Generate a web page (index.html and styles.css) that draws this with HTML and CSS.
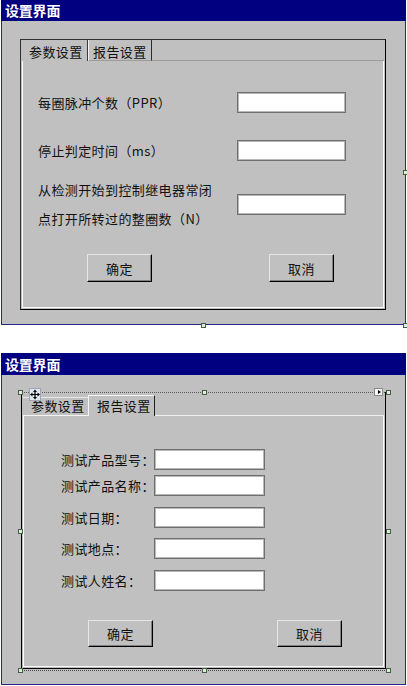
FILE: index.html
```html
<!DOCTYPE html>
<html>
<head>
    <title>设置界面</title>
    <link rel="stylesheet" href="styles.css">
</head>
<body>
    <div class="window win-params">
        <div class="titlebar">设置界面</div>
        <div class="tabctl">
            <div class="tabstrip">
                <div class="tab active">参数设置</div>
                <div class="tab">报告设置</div>
                <div class="tab-fill"></div>
            </div>
            <div class="page">
                <div class="row r1">
                    <label>每圈脉冲个数（PPR）</label>
                    <input type="text">
                </div>
                <div class="row r2">
                    <label>停止判定时间（ms）</label>
                    <input type="text">
                </div>
                <div class="row r3">
                    <label>从检测开始到控制继电器常闭<br>点打开所转过的整圈数（N）</label>
                    <input type="text">
                </div>
                <div class="buttons">
                    <button class="btn-ok">确定</button>
                    <button class="btn-cancel">取消</button>
                </div>
            </div>
        </div>
        <span class="handle" style="left:199px; top:323px"></span>
        <span class="handle" style="left:401px; top:323px"></span>
        <span class="handle" style="left:401px; top:170px"></span>
    </div>

    <div class="window win-report">
        <div class="titlebar">设置界面</div>
        <div class="tabctl">
            <div class="tabstrip">
                <div class="tab">参数设置</div>
                <div class="tab active">报告设置</div>
                <div class="tab-fill"></div>
            </div>
            <div class="page">
                <div class="field f1">
                    <label>测试产品型号：</label>
                    <input type="text">
                </div>
                <div class="field f2">
                    <label>测试产品名称：</label>
                    <input type="text">
                </div>
                <div class="field f3">
                    <label>测试日期：</label>
                    <input type="text">
                </div>
                <div class="field f4">
                    <label>测试地点：</label>
                    <input type="text">
                </div>
                <div class="field f5">
                    <label>测试人姓名：</label>
                    <input type="text">
                </div>
                <div class="buttons">
                    <button class="btn-ok">确定</button>
                    <button class="btn-cancel">取消</button>
                </div>
            </div>
        </div>

        <div class="selection"></div>
        <span class="handle" style="left:16px; top:37px"></span>
        <span class="handle" style="left:200px; top:37px"></span>
        <span class="handle" style="left:384px; top:37px"></span>
        <span class="handle" style="left:16px; top:176px"></span>
        <span class="handle" style="left:384px; top:176px"></span>
        <span class="handle" style="left:16px; top:315px"></span>
        <span class="handle" style="left:200px; top:315px"></span>
        <span class="handle" style="left:384px; top:315px"></span>

        <svg class="move-icon" width="12" height="13" viewBox="0 0 12 13">
            <rect x="0.5" y="0.5" width="11" height="12" fill="#dfe6f0" stroke="#9aa6b8"/>
            <path d="M6 1.5 L8 4 H6.6 V5.9 H8.5 V4.5 L11 6.5 L8.5 8.5 V7.1 H6.6 V9 H8 L6 11.5 L4 9 H5.4 V7.1 H3.5 V8.5 L1 6.5 L3.5 4.5 V5.9 H5.4 V4 H4 Z" fill="#000"/>
        </svg>
        <span class="arrow-btn"></span>
    </div>
</body>
</html>
```

FILE: styles.css
```css
body {
    margin: 0;
    padding: 0;
    background: #fff;
    font-family: "Noto Sans CJK SC", "DejaVu Sans", sans-serif;
    font-size: 13px;
    color: #111;
}
.window {
    position: relative;
    box-sizing: border-box;
    width: 405px;
    margin-left: 1px;
    background: #c0c0c0;
    border: 1px solid #26268f;
    border-top: none;
}
.win-params { height: 325px; }
.win-report { height: 332px; margin-top: 28px; }

.titlebar {
    height: 21px;
    line-height: 21px;
    margin: 0 -1px;
    padding-left: 4px;
    background: #000080;
    color: #fff;
    font-size: 14px;
    font-weight: bold;
    letter-spacing: -0.2px;
}
.win-report .titlebar { height: 22px; line-height: 22px; }

/* tab control */
.tabctl {
    box-sizing: border-box;
    display: flex;
    flex-direction: column;
    border: 1px solid #000;
    padding: 0 1px 1px 1px;
}
.win-params .tabctl {
    width: 366px;
    height: 271px;
    margin: 18px 0 0 18px;
    border-top-color: #303030;
    border-left-color: #303030;
}
.win-report .tabctl {
    width: 365px;
    height: 277px;
    margin: 17px 0 0 19px;
    border-top: none;
    padding-top: 1px;
}
.tabstrip {
    display: flex;
    flex: none;
}
.tab {
    box-sizing: border-box;
    white-space: nowrap;
    letter-spacing: 0.4px;
}
.tab-fill {
    flex: 1;
    border-bottom: 1px solid #9c9c9c;
}

.win-params .tabstrip { height: 21px; }
.win-params .tab {
    height: 21px;
    line-height: 19px;
    padding-top: 2px;
}
.win-params .tab.active {
    width: 66px;
    padding-left: 7px;
    border-right: 1px solid #3a3a3a;
}
.win-params .tab:not(.active) {
    width: 64px;
    padding-left: 4px;
    border-left: 1px solid #f4f4f4;
    border-right: 1px solid #2a2a2a;
    border-bottom: 1px solid #9c9c9c;
}

.win-report .tabstrip { height: 23px; }
.win-report .tab:not(.active) {
    width: 65px;
    margin-top: 4px;
    height: 19px;
    line-height: 16px;
    padding-left: 8px;
    border-top: 1px solid #e8e8e8;
    border-bottom: 1px solid #f4f4f4;
}
.win-report .tab.active {
    width: 67px;
    margin-top: 2px;
    height: 21px;
    line-height: 19px;
    padding-left: 8px;
    border-top: 1px solid #f4f4f4;
    border-left: 1px solid #f4f4f4;
    border-right: 1px solid #202020;
}
.win-report .tab-fill { border-bottom-color: #f0f0f0; }

.page {
    flex: 1;
    border: 1px solid #fafafa;
    border-top: none;
}
.win-params .page { padding: 31px 0 0 15px; }
.win-report .page { padding: 33px 0 0 37px; }

label {
    flex: none;
    white-space: nowrap;
    letter-spacing: 0.4px;
}
input {
    flex: none;
    box-sizing: border-box;
    display: block;
    height: 21px;
    margin: 0;
    padding: 0;
    background: #fff;
    border: 1px solid #6f6f6f;
    box-shadow: inset 0 0 0 1px #b8b8b8;
}

/* parameter page */
.row {
    display: flex;
    align-items: center;
}
.row label {
    width: 199px;
    line-height: 20px;
}
.row input { width: 109px; }
.r2 { margin-top: 27px; }
.r3 { margin-top: 14px; }
.r3 label { line-height: 29px; }
.win-params .buttons { margin: 21px 0 0 49px; }
.win-params .btn-cancel { margin-left: 117px; }

/* report page */
.field {
    display: flex;
    align-items: center;
}
.field label {
    width: 93px;
    line-height: 20px;
}
.field input { width: 111px; }
.f2 { margin-top: 5px; }
.f3 { margin-top: 11px; }
.f4 { margin-top: 10px; }
.f5 { margin-top: 11px; }
.win-report .buttons { margin: 29px 0 0 27px; }
.win-report .btn-cancel { margin-left: 124px; }
.win-report button { height: 27px; }

.buttons { display: flex; }
button {
    flex: none;
    box-sizing: border-box;
    width: 65px;
    height: 28px;
    padding: 0;
    background: #c0c0c0;
    font-family: inherit;
    font-size: 13px;
    letter-spacing: 0.4px;
    color: #111;
    border: 1px solid;
    border-color: #e6e6e6 #000 #000 #e6e6e6;
    box-shadow: inset -1px -1px 0 #808080;
}

/* designer overlays */
.handle {
    position: absolute;
    box-sizing: border-box;
    width: 5px;
    height: 5px;
    background: #d6f2d0;
    border: 1px solid #4a5a4a;
}
.selection {
    position: absolute;
    left: 18px;
    top: 39px;
    width: 369px;
    height: 279px;
    box-sizing: border-box;
    border-top: 1px dotted #5a5a5a;
    border-bottom: 1px dotted #4a4a4a;
}
.move-icon {
    position: absolute;
    left: 27px;
    top: 35px;
}
.arrow-btn {
    position: absolute;
    left: 372px;
    top: 35px;
    box-sizing: border-box;
    width: 9px;
    height: 8px;
    background: #f4f4f4;
    border: 1px solid #8a8a8a;
}
.arrow-btn::after {
    content: "";
    position: absolute;
    left: 3px;
    top: 1px;
    border-left: 3px solid #000;
    border-top: 2px solid transparent;
    border-bottom: 2px solid transparent;
}
```
